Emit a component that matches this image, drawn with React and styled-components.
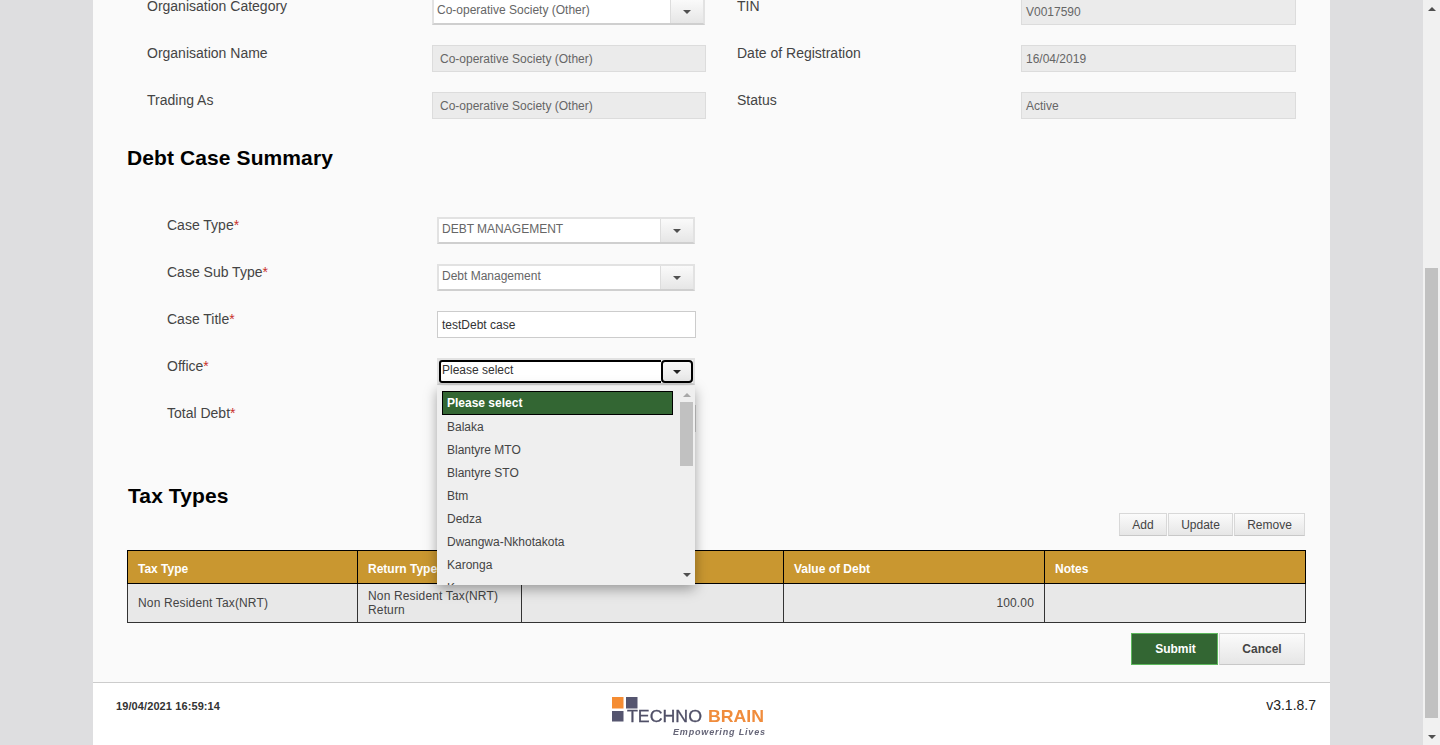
import React from "react";
import styled, { createGlobalStyle } from "styled-components";

const GlobalStyle = createGlobalStyle`
  html, body {
    margin: 0;
    height: 745px;
    overflow: hidden;
    background-color: #dedee0;
    font-family: "Liberation Sans", Arial, sans-serif;
  }
`;

const Page = styled.div`
  display: flex;
  height: 745px;
  overflow: hidden;
`;
const Gutter = styled.div`
  flex: ${(p) => (p.$grow ? "1" : "0 0 93px")};
  background-color: #dedee0;
`;
const Main = styled.div`
  flex: 0 0 1237px;
  display: flex;
  flex-direction: column;
  background-color: #fafafa;
`;
const Content = styled.div`
  flex: 1;
  overflow: hidden;
  min-height: 0;
`;
const Scrolled = styled.div`
  margin-top: -2px;
`;

/* window scrollbar */
const ScrollTrack = styled.div`
  flex: 0 0 17px;
  display: flex;
  flex-direction: column;
  align-items: center;
  background-color: #f1f1f1;
`;
const ArrowBox = styled.div`
  flex: 0 0 17px;
  display: flex;
  align-items: center;
  justify-content: center;
  ${(p) => p.$end && "margin-top: auto;"}
`;
const Arrow = styled.span`
  width: 0;
  height: 0;
  border-left: ${(p) => p.$size || 4}px solid transparent;
  border-right: ${(p) => p.$size || 4}px solid transparent;
  ${(p) =>
    p.$up
      ? `border-bottom: ${p.$tall || 4}px solid ${p.$color || "#505050"};`
      : `border-top: ${p.$tall || 4}px solid ${p.$color || "#505050"};`}
`;
const WindowThumb = styled.div`
  width: 13px;
  height: 450px;
  margin-top: 251px;
  background-color: #c1c1c1;
`;

/* organisation details */
const OrgGrid = styled.div`
  display: grid;
  grid-template-columns: 559px 559px;
  column-gap: 31px;
  padding-left: 54px;
`;
const OrgColumn = styled.div`
  display: flex;
  flex-direction: column;
  gap: 20px;
`;
const OrgRow = styled.div`
  display: grid;
  grid-template-columns: ${(p) => p.$label}px ${(p) => p.$field}px;
  height: 27px;
`;
const Label = styled.div`
  font-size: 14px;
  line-height: 16px;
  color: #444;
`;
const Req = styled.span`
  color: #c9302c;
`;
const ReadOnly = styled.div`
  box-sizing: border-box;
  height: 27px;
  padding-left: ${(p) => p.$pad}px;
  background-color: #ebebeb;
  border: 1px solid #dcdcdc;
  font-size: 12px;
  line-height: 27px;
  color: #666;
`;

const Heading = styled.h2`
  margin: ${(p) => p.$top}px 0 0 ${(p) => p.$left}px;
  font-size: 21px;
  line-height: 24px;
  letter-spacing: 0.1px;
  font-weight: bold;
  color: #000;
`;

/* case form */
const CaseForm = styled.div`
  display: flex;
  flex-direction: column;
  gap: 20px;
  margin-top: 47px;
  padding-left: 74px;
`;
const CaseRow = styled.div`
  display: grid;
  grid-template-columns: 270px 259px;
  height: 27px;
`;
const SelectBox = styled.div`
  position: relative;
  box-sizing: border-box;
  display: flex;
  width: ${(p) => p.$width || 258}px;
  height: 27px;
  border: 2px solid #e2e2e2;
  border-bottom: 2px solid #cfcfcf;
  background-color: #fff;
`;
const SelectText = styled.div`
  flex: 1;
  box-sizing: border-box;
  padding-left: ${(p) => (p.$focus ? 1 : 3)}px;
  font-size: 12px;
  line-height: ${(p) => (p.$focus ? 16 : 20)}px;
  color: ${(p) => (p.$focus ? "#333" : "#666")};
  ${(p) => p.$focus && "border: 2px solid #000; border-right: 0; border-radius: 3px 0 0 3px;"}
`;
const SelectButton = styled.div`
  box-sizing: border-box;
  flex: 0 0 ${(p) => (p.$focus ? 32 : 33)}px;
  display: flex;
  align-items: center;
  justify-content: center;
  background: linear-gradient(#fafafa, #e6e6e6);
  border-left: 1px solid #ddd;
  ${(p) => p.$focus && "border: 2px solid #000; border-radius: 4px; background: linear-gradient(#f7f7f7, #e8e8e8);"}
`;
const TextField = styled.div`
  box-sizing: border-box;
  height: 27px;
  padding-left: 4px;
  background-color: #fff;
  border: 1px solid #ccc;
  font-size: 12px;
  line-height: 27px;
  color: #333;
`;

/* office dropdown */
const Dropdown = styled.div`
  position: absolute;
  top: 26px;
  left: -2px;
  z-index: 5;
  display: flex;
  width: 258px;
  height: 199px;
  overflow: hidden;
  background-color: #efefef;
  box-shadow: 0 4px 12px rgba(0, 0, 0, 0.35);
`;
const OptionList = styled.div`
  flex: 0 0 243px;
  padding: 5px 0 0 5px;
  box-sizing: border-box;
`;
const Option = styled.div`
  box-sizing: border-box;
  width: 231px;
  height: ${(p) => (p.$selected ? 24 : 23)}px;
  padding-left: ${(p) => (p.$selected ? 4 : 5)}px;
  font-size: 12px;
  line-height: ${(p) => (p.$selected ? 22 : 25)}px;
  color: ${(p) => (p.$selected ? "#fff" : "#444")};
  ${(p) => p.$selected && "font-weight: bold; background-color: #336633; border: 1px solid #000;"}
`;
const ListScroll = styled.div`
  flex: 0 0 13px;
  display: flex;
  flex-direction: column;
  align-items: center;
`;
const ListArrow = styled.div`
  flex: 0 0 ${(p) => (p.$end ? 14 : 15)}px;
  display: flex;
  align-items: center;
  justify-content: center;
  ${(p) => (p.$end ? "margin-top: auto; margin-bottom: 3px;" : "margin-top: 1px;")}
`;
const ListThumb = styled.div`
  width: 13px;
  height: 64px;
  background-color: #c1c1c1;
`;

/* tax types */
const ActionRow = styled.div`
  display: flex;
  justify-content: flex-end;
  gap: 1px;
  margin-top: ${(p) => p.$top}px;
  padding-right: 25px;
`;
const Button = styled.button`
  box-sizing: border-box;
  width: ${(p) => p.$width}px;
  height: ${(p) => p.$height || 23}px;
  padding: 0;
  border: 1px solid #d8d8d8;
  border-bottom-color: #c8c8c8;
  background: linear-gradient(#fbfbfb, #e6e6e6);
  font-family: "Liberation Sans", Arial, sans-serif;
  font-size: 12px;
  font-weight: ${(p) => (p.$bold ? "bold" : "normal")};
  color: #444;
`;
const SubmitButton = styled(Button)`
  padding-left: 2px;
  border: 1px solid #5cb85c;
  background: #336633;
  color: #fff;
`;
const TaxTable = styled.table`
  width: 1178px;
  margin: 14px 0 0 34px;
  border-collapse: collapse;
  table-layout: fixed;
  font-size: 12px;
`;
const Th = styled.th`
  height: 33px;
  padding: 4px 10px 0;
  box-sizing: border-box;
  background-color: #c99730;
  border: 1px solid #000;
  text-align: left;
  font-weight: bold;
  color: #fff;
`;
const Td = styled.td`
  height: 39px;
  padding: 0 10px;
  box-sizing: border-box;
  background-color: #e8e8e8;
  border: 1px solid #333;
  line-height: 14px;
  letter-spacing: 0.15px;
  color: #444;
  text-align: ${(p) => (p.$right ? "right" : "left")};
`;

/* footer */
const Footer = styled.div`
  flex: 0 0 63px;
  box-sizing: border-box;
  display: grid;
  grid-template-columns: 495px 1fr auto;
  align-items: start;
  padding: 12px 14px 0 23px;
  background-color: #fff;
  border-top: 1px solid #ccc;
`;
const Stamp = styled.div`
  margin-top: 3px;
  font-size: 11px;
  line-height: 16px;
  letter-spacing: 0.1px;
  font-weight: bold;
  color: #333;
`;
const Version = styled.div`
  margin-top: 2px;
  font-size: 14px;
  line-height: 16px;
  color: #222;
`;
const LogoSvg = styled.svg`
  display: block;
  filter: blur(0.35px);
`;

const offices = ["Balaka", "Blantyre MTO", "Blantyre STO", "Btm", "Dedza", "Dwangwa-Nkhotakota", "Karonga", "Kasungu"];

const Logo = () => (
  <LogoSvg width="156" height="45" viewBox="0 0 156 45">
    <rect x="1" y="2" width="11.5" height="11.5" fill="#f58c32" />
    <rect x="15" y="2" width="11.5" height="11.5" fill="#55556f" />
    <rect x="1" y="16" width="11.5" height="10.5" fill="#55556f" />
    <text x="16" y="27" fontFamily="Liberation Sans, sans-serif" fontSize="17" stroke="#4f4f66" strokeWidth="0.3" fill="#4f4f66" textLength="75" lengthAdjust="spacingAndGlyphs">TECHNO</text>
    <text x="97" y="27" fontFamily="Liberation Sans, sans-serif" fontSize="17" fontWeight="bold" fill="#f08c3c" textLength="56" lengthAdjust="spacingAndGlyphs">BRAIN</text>
    <text x="62" y="40" fontFamily="Liberation Sans, sans-serif" fontSize="9" fontStyle="italic" fontWeight="bold" fill="#666678" textLength="92">Empowering Lives</text>
  </LogoSvg>
);

const Field = ({ label }) => (
  <Label>
    {label}
    <Req>*</Req>
  </Label>
);

const App = () => {
  return (
    <Page>
      <GlobalStyle />
      <Gutter />
      <Main>
        <Content>
          <Scrolled>
            <OrgGrid>
              <OrgColumn>
                <OrgRow $label={285} $field={274}>
                  <Label>Organisation Category</Label>
                  <SelectBox $width={273}>
                    <SelectText>Co-operative Society (Other)</SelectText>
                    <SelectButton><Arrow /></SelectButton>
                  </SelectBox>
                </OrgRow>
                <OrgRow $label={285} $field={274}>
                  <Label>Organisation Name</Label>
                  <ReadOnly $pad={7}>Co-operative Society (Other)</ReadOnly>
                </OrgRow>
                <OrgRow $label={285} $field={274}>
                  <Label>Trading As</Label>
                  <ReadOnly $pad={7}>Co-operative Society (Other)</ReadOnly>
                </OrgRow>
              </OrgColumn>
              <OrgColumn>
                <OrgRow $label={284} $field={275}>
                  <Label>TIN</Label>
                  <ReadOnly $pad={4}>V0017590</ReadOnly>
                </OrgRow>
                <OrgRow $label={284} $field={275}>
                  <Label>Date of Registration</Label>
                  <ReadOnly $pad={4}>16/04/2019</ReadOnly>
                </OrgRow>
                <OrgRow $label={284} $field={275}>
                  <Label>Status</Label>
                  <ReadOnly $pad={4}>Active</ReadOnly>
                </OrgRow>
              </OrgColumn>
            </OrgGrid>

            <Heading $top={27} $left={34}>Debt Case Summary</Heading>

            <CaseForm>
              <CaseRow>
                <Field label="Case Type" />
                <SelectBox>
                  <SelectText>DEBT MANAGEMENT</SelectText>
                  <SelectButton><Arrow /></SelectButton>
                </SelectBox>
              </CaseRow>
              <CaseRow>
                <Field label="Case Sub Type" />
                <SelectBox>
                  <SelectText>Debt Management</SelectText>
                  <SelectButton><Arrow /></SelectButton>
                </SelectBox>
              </CaseRow>
              <CaseRow>
                <Field label="Case Title" />
                <TextField>testDebt case</TextField>
              </CaseRow>
              <CaseRow>
                <Field label="Office" />
                <SelectBox>
                  <SelectText $focus>Please select</SelectText>
                  <SelectButton $focus><Arrow $color="#222" /></SelectButton>
                  <Dropdown>
                    <OptionList>
                      <Option $selected>Please select</Option>
                      {offices.map((o) => (
                        <Option key={o}>{o}</Option>
                      ))}
                    </OptionList>
                    <ListScroll>
                      <ListArrow><Arrow $up $color="#a8a8a8" /></ListArrow>
                      <ListThumb />
                      <ListArrow $end><Arrow $color="#505050" /></ListArrow>
                    </ListScroll>
                  </Dropdown>
                </SelectBox>
              </CaseRow>
              <CaseRow>
                <Field label="Total Debt" />
                <TextField />
              </CaseRow>
            </CaseForm>

            <Heading $top={52} $left={35}>Tax Types</Heading>

            <ActionRow $top={5}>
              <Button $width={48}>Add</Button>
              <Button $width={65}>Update</Button>
              <Button $width={71}>Remove</Button>
            </ActionRow>

            <TaxTable>
              <colgroup>
                <col width="230" />
                <col width="164" />
                <col width="262" />
                <col width="261" />
                <col width="261" />
              </colgroup>
              <thead>
                <tr>
                  <Th>Tax Type</Th>
                  <Th>Return Type</Th>
                  <Th>Period</Th>
                  <Th>Value of Debt</Th>
                  <Th>Notes</Th>
                </tr>
              </thead>
              <tbody>
                <tr>
                  <Td>Non Resident Tax(NRT)</Td>
                  <Td>Non Resident Tax(NRT) Return</Td>
                  <Td />
                  <Td $right>100.00</Td>
                  <Td />
                </tr>
              </tbody>
            </TaxTable>

            <ActionRow $top={10}>
              <SubmitButton $width={87} $height={32} $bold>Submit</SubmitButton>
              <Button $width={86} $height={32} $bold>Cancel</Button>
            </ActionRow>
          </Scrolled>
        </Content>
        <Footer>
          <Stamp>19/04/2021 16:59:14</Stamp>
          <Logo />
          <Version>v3.1.8.7</Version>
        </Footer>
      </Main>
      <Gutter $grow />
      <ScrollTrack>
        <ArrowBox><Arrow $up /></ArrowBox>
        <WindowThumb />
        <ArrowBox $end><Arrow /></ArrowBox>
      </ScrollTrack>
    </Page>
  );
};

export default App;
